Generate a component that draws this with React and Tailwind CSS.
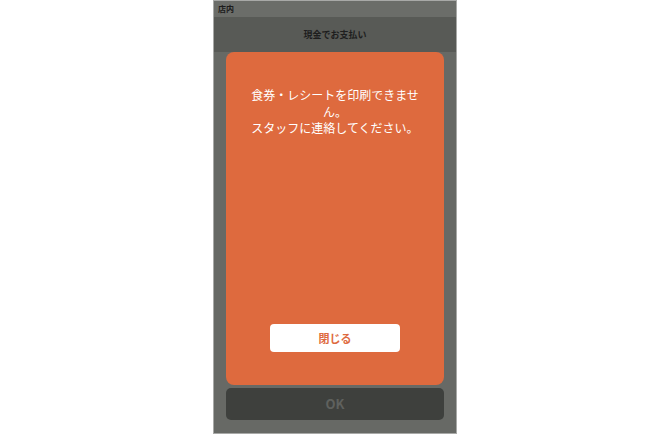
export default function App() {
  return (
    <div
      className="w-[670px] h-[434px] bg-white flex justify-center overflow-hidden"
      style={{ fontFamily: '"Noto Sans CJK JP", "Noto Sans", sans-serif' }}
    >
      <div className="w-[244px] h-[434px] border-x border-b border-t border-[#a8a9a7] bg-[#676965] flex flex-col">
        {/* status bar */}
        <div className="h-[16px] bg-[#6b6d69] flex items-center px-[4px]">
          <span className="text-[8px] font-bold text-[#1c1c1c] leading-none">店内</span>
        </div>
        {/* header */}
        <div className="h-[35px] bg-[#585a56] flex items-center justify-center">
          <span className="text-[9px] font-bold text-[#1e1e1e]">現金でお支払い</span>
        </div>
        {/* body */}
        <div className="flex-1 flex flex-col items-center">
          <div className="w-[218px] h-[333px] bg-[#de6a3e] rounded-[8px] flex flex-col items-center px-6 pt-[35px] pb-[33px]">
            <p className="text-[12px] leading-[16.5px] text-white text-center">
              食券・レシートを印刷できません。
              <br />
              スタッフに連絡してください。
            </p>
            <div className="flex-1" />
            <button className="w-[130px] h-[28px] bg-white rounded-[4px] text-[11px] font-bold text-[#de6a3e]">
              閉じる
            </button>
          </div>
          <div className="mt-[3px] w-[218px] h-[32px] bg-[#3e403d] rounded-[5px] flex items-center justify-center">
            <span className="text-[13px] font-bold text-[#5f615e]">OK</span>
          </div>
        </div>
      </div>
    </div>
  );
}
